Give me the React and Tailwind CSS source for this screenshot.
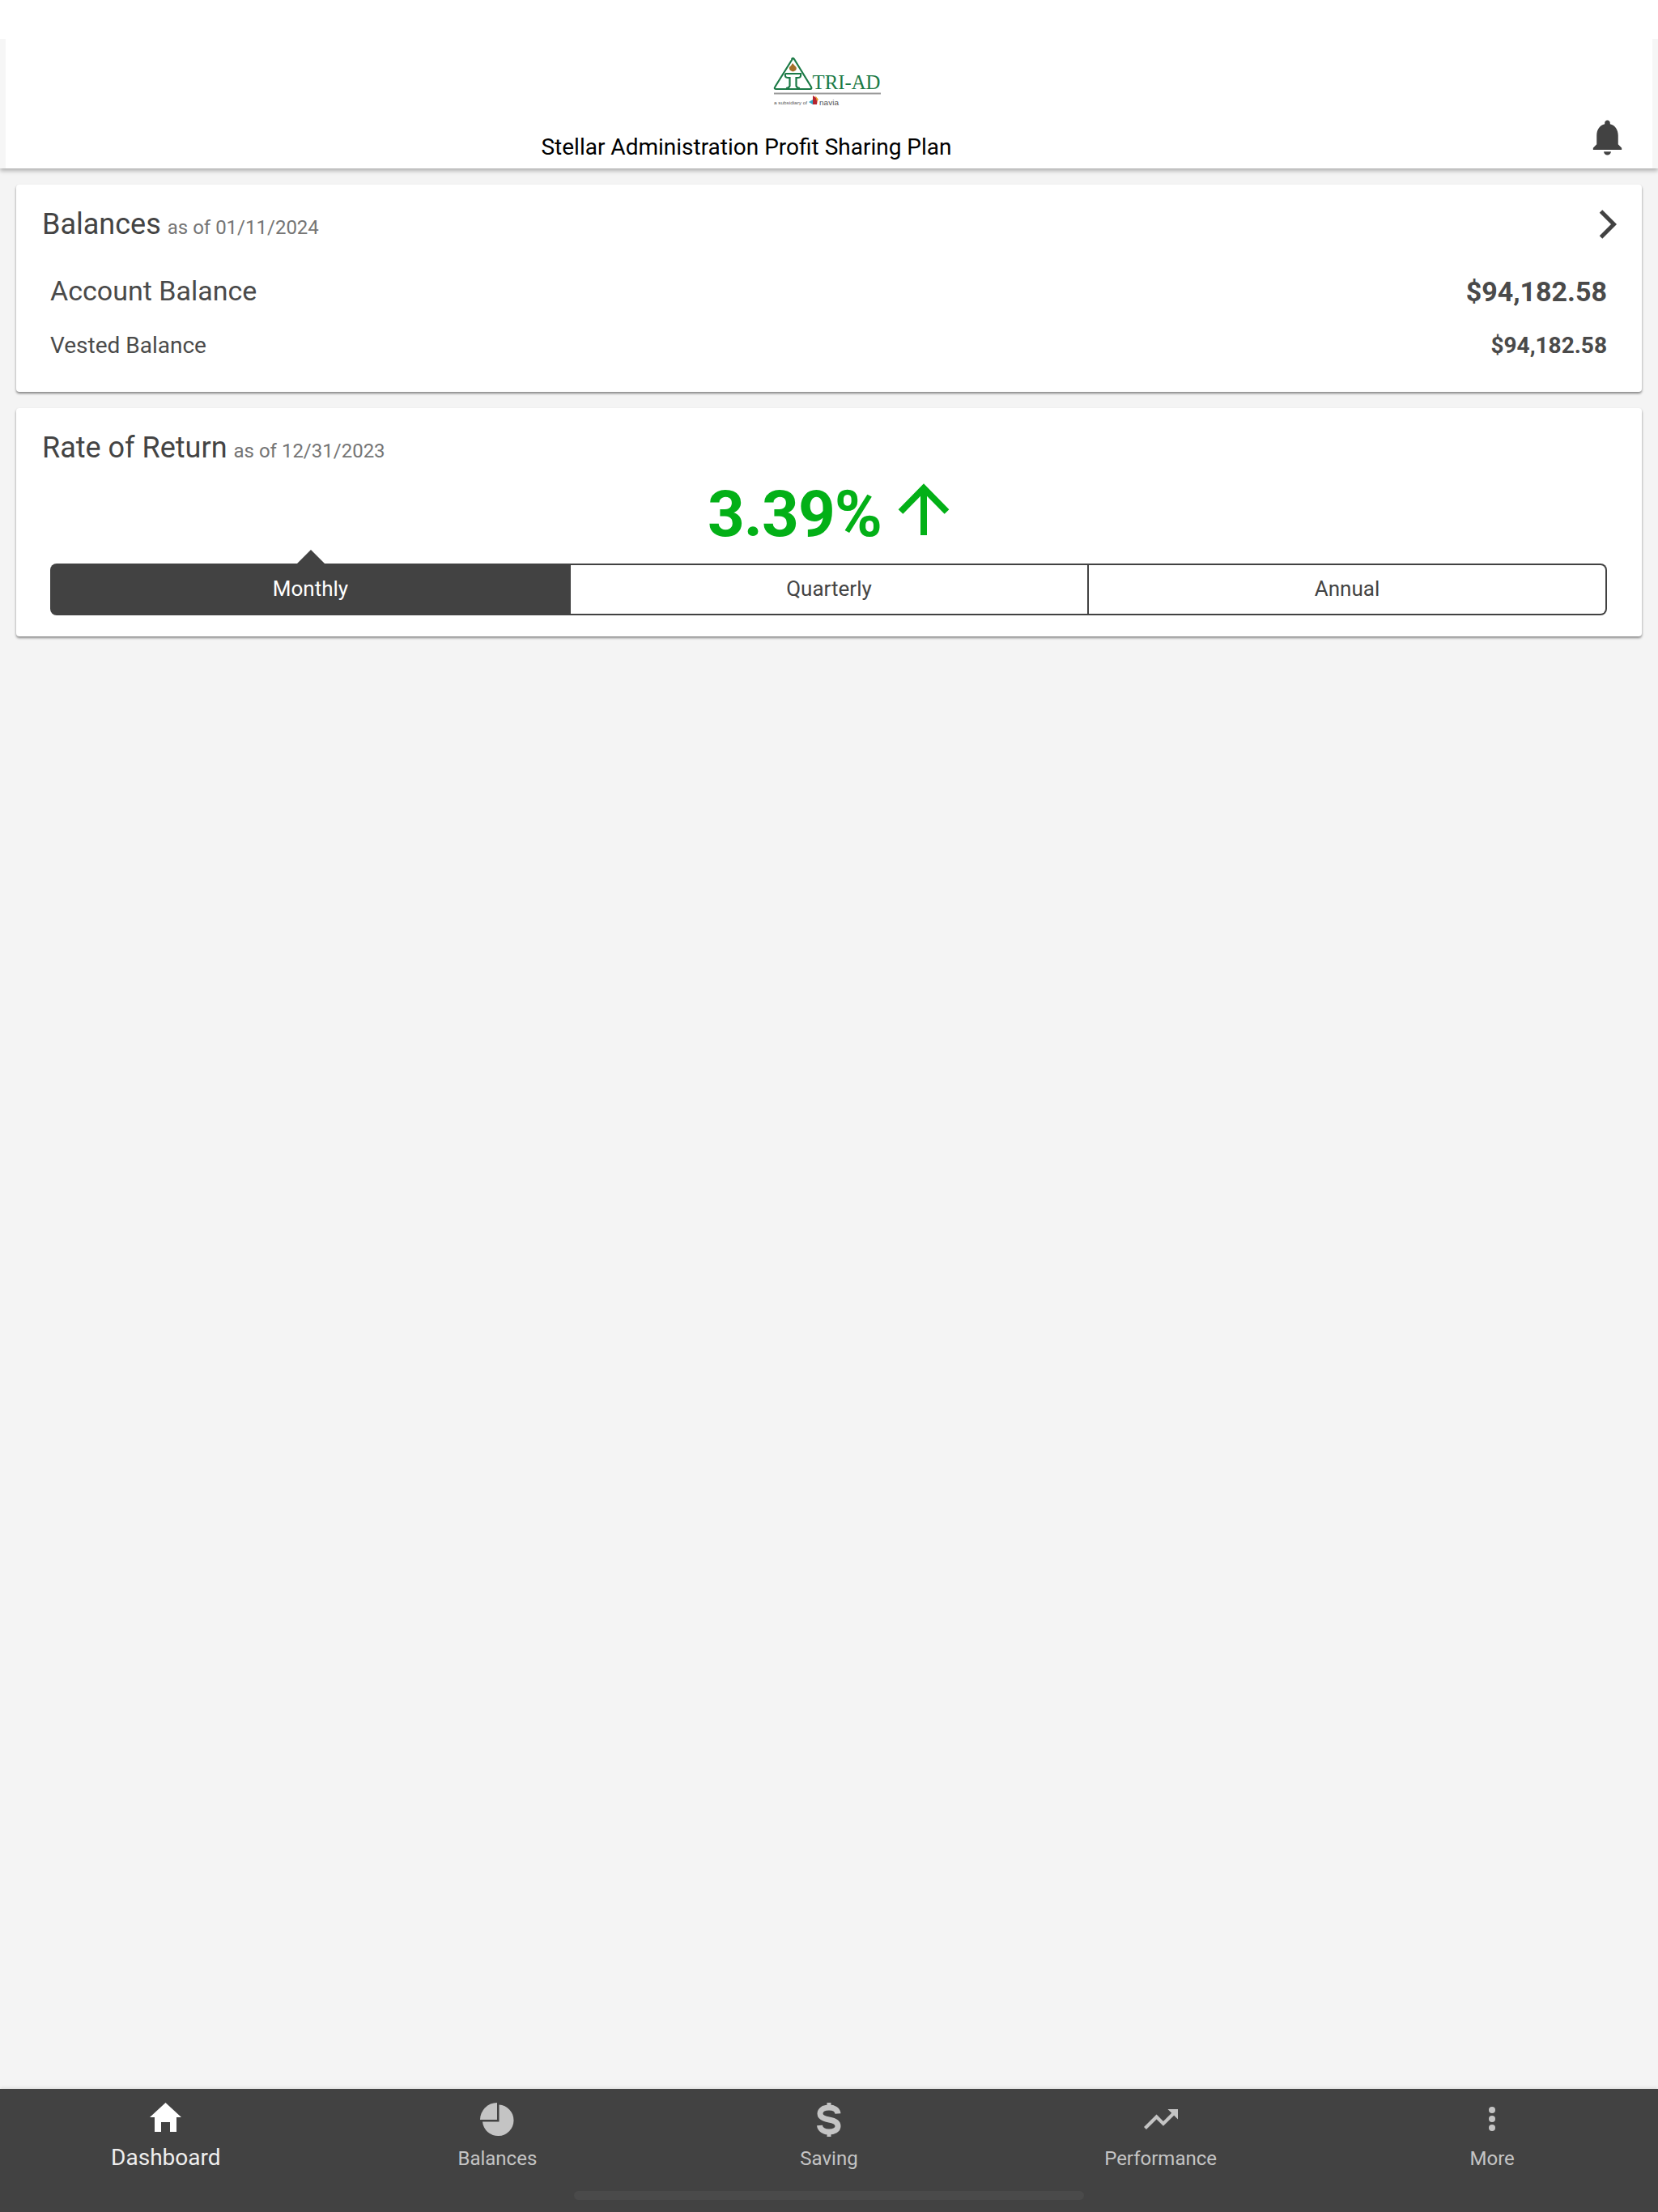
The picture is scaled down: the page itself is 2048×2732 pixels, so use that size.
import React from "react";

const Logo = () => (
  <svg width="200" height="100" viewBox="0 0 200 100" className="block">
    <path d="M59 22.5 L37.5 57 Q35.5 60 39 60 L81 60 Q83.5 60 81.5 56.5 L61 23 Q59.5 20.5 57.8 23" fill="none" stroke="#1b7a46" strokeWidth="2.2" />
    <path d="M50 41 H69 Q70 46 66 46 H63.5 V56 Q64 58.5 68 59 M50 41 Q49 46 53 46 H55.5 V56 Q55 58.5 51 59" fill="none" stroke="#1b7a46" strokeWidth="2.2" />
    <path d="M59 28 Q61.5 31 63.5 33 Q65 37 59.5 38.5 Q54 37 55 33 Q57.5 31 59 28 Z" fill="#a5702a" />
    <text x="83.5" y="60" fontFamily="'Liberation Serif', serif" fontSize="25" fill="#1b7a46" textLength="84" lengthAdjust="spacingAndGlyphs">TRI-AD</text>
    <rect x="36" y="64.5" width="132" height="2" fill="#9a9a9a" />
    <text x="36" y="79" fontFamily="'Liberation Sans', sans-serif" fontSize="6" fill="#555" textLength="41" lengthAdjust="spacingAndGlyphs">a subsidiary of</text>
    <path d="M79 76 L84 73 L84 79 Z" fill="#35a7c4" />
    <path d="M84 68 L90 72 L89 79 L84 79 Z" fill="#b5252f" />
    <path d="M87 68 L91 73 L89 75 Z" fill="#ee9c2b" />
    <text x="92" y="80" fontFamily="'Liberation Sans', sans-serif" fontSize="9" fill="#555" textLength="24" lengthAdjust="spacingAndGlyphs">navia</text>
  </svg>
);

const Bell = () => (
  <svg width="53" height="53" viewBox="0 0 24 24" fill="#424242">
    <path d="M12 22c1.1 0 2-.9 2-2h-4c0 1.1.89 2 2 2zm6-6v-5c0-3.07-1.64-5.64-4.5-6.32V4c0-.83-.67-1.5-1.5-1.5s-1.5.67-1.5 1.5v.68C7.63 5.36 6 7.92 6 11v5l-2 2v1h16v-1l-2-2z" />
  </svg>
);

const Chevron = () => (
  <svg width="22" height="36" viewBox="0 0 22 36" fill="none" stroke="#424242" strokeWidth="5" className="-mt-[2px]">
    <path d="M2.5 2 L18.5 18 L2.5 34" />
  </svg>
);

const ArrowUp = () => (
  <svg width="64" height="64" viewBox="0 0 64 64" fill="none" stroke="#03b017" strokeWidth="8">
    <path d="M32 64 V6 M3.5 35 L32 6 L60.5 35" />
  </svg>
);

const HomeIcon = () => (
  <svg width="39" height="36" viewBox="0 0 39 36" fill="#ffffff" className="-mt-[5px]">
    <polygon points="19.5,0 39,18 33,18 33,36 25,36 25,24 14,24 14,36 6,36 6,18 0,18" />
  </svg>
);

const PieIcon = () => (
  <svg width="42" height="42" viewBox="0 0 42 42" fill="#c4c4c4" className="mt-[1px]">
    <path d="M21 0 V21 H0 A21 21 0 0 1 21 0 Z" />
    <path d="M23.5 2.5 A19.3 19.3 0 1 1 3 23.5 H23.5 Z" />
  </svg>
);

const DollarIcon = () => (
  <svg width="32" height="42" viewBox="0 0 32 42" fill="none" className="mt-[1px]">
    <path d="M27 13.5 C26.5 8.5 22 6 16 6 C9.5 6 5 9 5 13.5 C5 18.5 10 20 16 21 C23 22.2 27 24 27 29 C27 33.5 22 36 16 36 C9.5 36 5 33 4.5 28" stroke="#c4c4c4" strokeWidth="7" />
    <rect x="13.5" y="0" width="5" height="6" fill="#c4c4c4" />
    <rect x="13.5" y="36" width="5" height="6" fill="#c4c4c4" />
  </svg>
);

const TrendIcon = () => (
  <svg width="42" height="25" viewBox="2 6 20 12" fill="#c4c4c4" preserveAspectRatio="none">
    <path d="M16 6l2.29 2.29-4.88 4.88-4-4L2 16.59 3.41 18l6-6 4 4 6.3-6.29L22 12V6z" />
  </svg>
);

const DotsIcon = () => (
  <svg width="10" height="32" viewBox="0 0 10 32" fill="#c4c4c4">
    <circle cx="5" cy="5" r="4" />
    <circle cx="5" cy="16" r="4" />
    <circle cx="5" cy="27" r="4" />
  </svg>
);

const NavItem = ({ icon, label, active }) => (
  <div className="flex-1 flex flex-col items-center">
    <div className="h-[60px] flex items-center justify-center">{icon}</div>
    <div className={active ? "text-[28px] leading-[36px] text-[#eeeeee]" : "text-[24px] leading-[36px] mt-[1px] text-[#c4c4c4]"}>{label}</div>
  </div>
);

export default function App() {
  return (
    <div className="h-[2732px] flex flex-col bg-[#f4f4f4] font-['Roboto',sans-serif] text-[#444444] overflow-hidden">
      <div className="h-12 bg-white shrink-0 relative z-20" />
      <header className="h-[160px] shrink-0 bg-[#f6f6f6] px-[7px] shadow-[0_3px_5px_rgba(0,0,0,0.28)] relative z-10">
        <div className="h-full bg-white flex flex-col">
          <div className="h-[100px] flex justify-center pr-[8px] mt-[2px]">
            <Logo />
          </div>
          <div className="flex items-start">
            <div className="w-[1830px] text-center text-[28px] leading-[36px] text-black mt-[14px]">Stellar Administration Profit Sharing Plan</div>
            <div className="ml-[122px] -mt-[7px]"><Bell /></div>
          </div>
        </div>
      </header>

      <main className="flex-1 flex flex-col gap-5 px-5 pt-5">
        <section className="h-[256px] bg-white rounded shadow-[0_2px_3px_rgba(0,0,0,0.45)] pl-[32px] pr-[32px] pt-[28px]">
          <div className="flex items-baseline justify-between">
            <div className="flex items-baseline gap-2">
              <span className="text-[36px] leading-[42px]">Balances</span>
              <span className="text-[24px] text-[#757575]">as of 01/11/2024</span>
            </div>
            <div className="self-center mr-[-1px]"><Chevron /></div>
          </div>
          <div className="flex items-center justify-between pl-[10px] pr-[11px] mt-[39px] text-[#4a4a4a]">
            <span className="text-[34px] leading-[40px]">Account Balance</span>
            <span className="text-[34px] leading-[40px] font-bold mt-[2px]">$94,182.58</span>
          </div>
          <div className="flex items-baseline justify-between pl-[10px] pr-[11px] mt-[30px] text-[#4a4a4a]">
            <span className="text-[28px] leading-[34px]">Vested Balance</span>
            <span className="text-[28px] leading-[34px] font-bold">$94,182.58</span>
          </div>
        </section>

        <section className="h-[282px] bg-white rounded shadow-[0_2px_3px_rgba(0,0,0,0.45)] pl-[32px] pr-[43px] pt-[28px]">
          <div className="flex items-baseline gap-2">
            <span className="text-[36px] leading-[42px]">Rate of Return</span>
            <span className="text-[24px] text-[#757575]">as of 12/31/2023</span>
          </div>
          <div className="flex items-center justify-center gap-[20px] h-[94px] mt-[13px] pl-[10px] text-[#03b017]">
            <span className="text-[80px] leading-[94px] font-bold tracking-[-1px]">3.39%</span>
            <div className="-mt-[12px]"><ArrowUp /></div>
          </div>
          <div className="flex ml-[10px] h-16 mt-[14px] text-[26px]">
            <div className="relative w-[643px] shrink-0 bg-[#424242] text-white rounded-l-lg flex items-center justify-center pb-[2px]">
              <span className="absolute -top-[17px] left-1/2 -translate-x-1/2 w-0 h-0 border-x-[17px] border-x-transparent border-b-[17px] border-b-[#424242]" />
              Monthly
            </div>
            <div className="flex-1 border-2 border-l-0 border-[#424242] flex items-center justify-center pb-[2px]">Quarterly</div>
            <div className="flex-1 border-2 border-l-0 border-[#424242] rounded-r-lg flex items-center justify-center pb-[2px]">Annual</div>
          </div>
        </section>
      </main>

      <nav className="h-[152px] shrink-0 bg-[#424242] relative shadow-[0_-1px_4px_rgba(0,0,0,0.12)]">
        <div className="flex pt-[7px]">
          <NavItem active icon={<HomeIcon />} label="Dashboard" />
          <NavItem icon={<PieIcon />} label="Balances" />
          <NavItem icon={<DollarIcon />} label="Saving" />
          <NavItem icon={<TrendIcon />} label="Performance" />
          <NavItem icon={<DotsIcon />} label="More" />
        </div>
        <div className="absolute left-[709px] bottom-[15px] w-[630px] h-[11px] rounded-full bg-[#4a4a4a]" />
      </nav>
    </div>
  );
}
